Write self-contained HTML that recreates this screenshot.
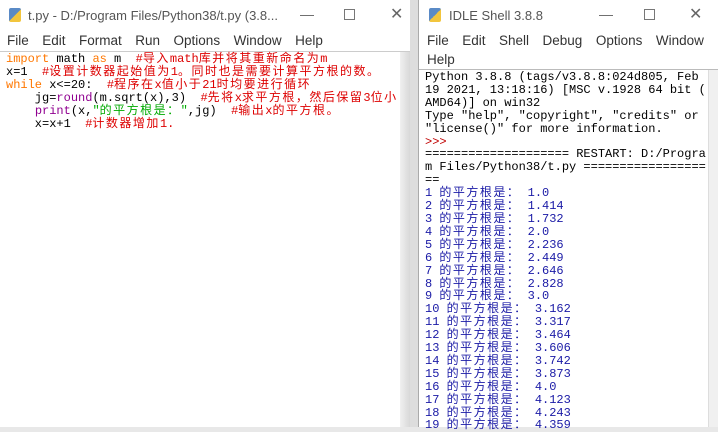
<!DOCTYPE html>
<html><head><meta charset="utf-8"><style>
*{margin:0;padding:0;box-sizing:border-box}
body{width:718px;height:427px;overflow:hidden;background:#e8e8e8;position:relative;font-family:"Liberation Sans","Noto Sans CJK SC",sans-serif}
.win{position:absolute;top:0;background:#fff}
.title{position:absolute;top:8px;font-size:13px;color:#555}
.menu{position:absolute;font-size:13.5px;color:#333;white-space:pre;word-spacing:3px}
.code{position:absolute;font-family:"Liberation Mono","Noto Sans CJK SC",monospace;font-size:12px;line-height:12.9px;white-space:pre;color:#000}
.z{letter-spacing:1.5px}
.k{color:#ff7700}.c{color:#dd0000}.b{color:#900090}.s{color:#00aa00}.o{color:#1a1aa6}.p{color:#c00000}
.ctl{position:absolute;top:6px;font-size:14px;color:#666}
</style></head><body>
<div class="win" style="left:0;width:410px;height:427px">
  <div style="position:absolute;left:9px;top:8px;width:12px;height:14px;background:linear-gradient(135deg,#5a8ac6 50%,#f2c53d 50%);border-radius:2px"></div>
  <div class="title" style="left:28px">t.py - D:/Program Files/Python38/t.py (3.8...</div>
  <div class="ctl" style="left:300px">—</div>
  <div class="ctl" style="left:344px;width:11px;height:11px;top:9px;border:1px solid #777"></div>
  <div class="ctl" style="left:390px;top:4px;font-size:16px">✕</div>
  <div class="menu" style="left:7px;top:33px">File  Edit  Format  Run  Options  Window  Help</div>
  <div style="position:absolute;left:0;top:51px;width:410px;height:1px;background:#ccc"></div>
  <div style="position:absolute;left:400px;top:52px;width:10px;height:375px;background:linear-gradient(90deg,#f0f0f0,#d8d8d8)"></div>
  <div class="code" style="left:6px;top:53px"><span class="k">import</span> math <span class="k">as</span> m  <span class="c">#<span class="z">导入</span>math<span class="z">库并将其重新命名为</span>m</span>
x=1  <span class="c">#<span class="z">设置计数器起始值为</span>1<span class="z">。同时也是需要计算平方根的数。</span></span>
<span class="k">while</span> x&lt;=20:  <span class="c">#<span class="z">程序在</span>x<span class="z">值小于</span>21<span class="z">时均要进行循环</span></span>
    jg=<span class="b">round</span>(m.sqrt(x),3)  <span class="c">#<span class="z">先将</span>x<span class="z">求平方根，然后保留</span>3<span class="z">位小</span></span>
    <span class="b">print</span>(x,<span class="s">"<span class="z">的平方根是：</span>"</span>,jg)  <span class="c">#<span class="z">输出</span>x<span class="z">的平方根。</span></span>
    x=x+1  <span class="c">#<span class="z">计数器增加</span>1.</span></div>
</div>
<div style="position:absolute;left:410px;top:0;width:8px;height:427px;background:#ddd"></div>
<div class="win" style="left:418px;width:300px;height:427px;border-left:1px solid #aaa">
  <div style="position:absolute;left:10px;top:8px;width:12px;height:14px;background:linear-gradient(135deg,#5a8ac6 50%,#f2c53d 50%);border-radius:2px"></div>
  <div class="title" style="left:30px">IDLE Shell 3.8.8</div>
  <div class="ctl" style="left:180px">—</div>
  <div class="ctl" style="left:225px;width:11px;height:11px;top:9px;border:1px solid #777"></div>
  <div class="ctl" style="left:270px;top:4px;font-size:16px">✕</div>
  <div class="menu" style="left:8px;top:33px">File  Edit  Shell  Debug  Options  Window</div>
  <div class="menu" style="left:8px;top:52px">Help</div>
  <div style="position:absolute;left:0;top:69px;width:300px;height:1px;background:#bbb"></div>
  <div style="position:absolute;left:289px;top:70px;width:11px;height:357px;background:#f0f0f0;border-left:1px solid #ddd"></div>
  <div class="code" style="left:6px;top:71px">Python 3.8.8 (tags/v3.8.8:024d805, Feb
19 2021, 13:18:16) [MSC v.1928 64 bit (
AMD64)] on win32
Type "help", "copyright", "credits" or
"license()" for more information.
<span class="p">&gt;&gt;&gt;</span>
==================== RESTART: D:/Progra
m Files/Python38/t.py =================
==
<span class="o">1 <span class="z">的平方根是：</span> 1.0
2 <span class="z">的平方根是：</span> 1.414
3 <span class="z">的平方根是：</span> 1.732
4 <span class="z">的平方根是：</span> 2.0
5 <span class="z">的平方根是：</span> 2.236
6 <span class="z">的平方根是：</span> 2.449
7 <span class="z">的平方根是：</span> 2.646
8 <span class="z">的平方根是：</span> 2.828
9 <span class="z">的平方根是：</span> 3.0
10 <span class="z">的平方根是：</span> 3.162
11 <span class="z">的平方根是：</span> 3.317
12 <span class="z">的平方根是：</span> 3.464
13 <span class="z">的平方根是：</span> 3.606
14 <span class="z">的平方根是：</span> 3.742
15 <span class="z">的平方根是：</span> 3.873
16 <span class="z">的平方根是：</span> 4.0
17 <span class="z">的平方根是：</span> 4.123
18 <span class="z">的平方根是：</span> 4.243
19 <span class="z">的平方根是：</span> 4.359</span></div>
</div>
</body></html>
